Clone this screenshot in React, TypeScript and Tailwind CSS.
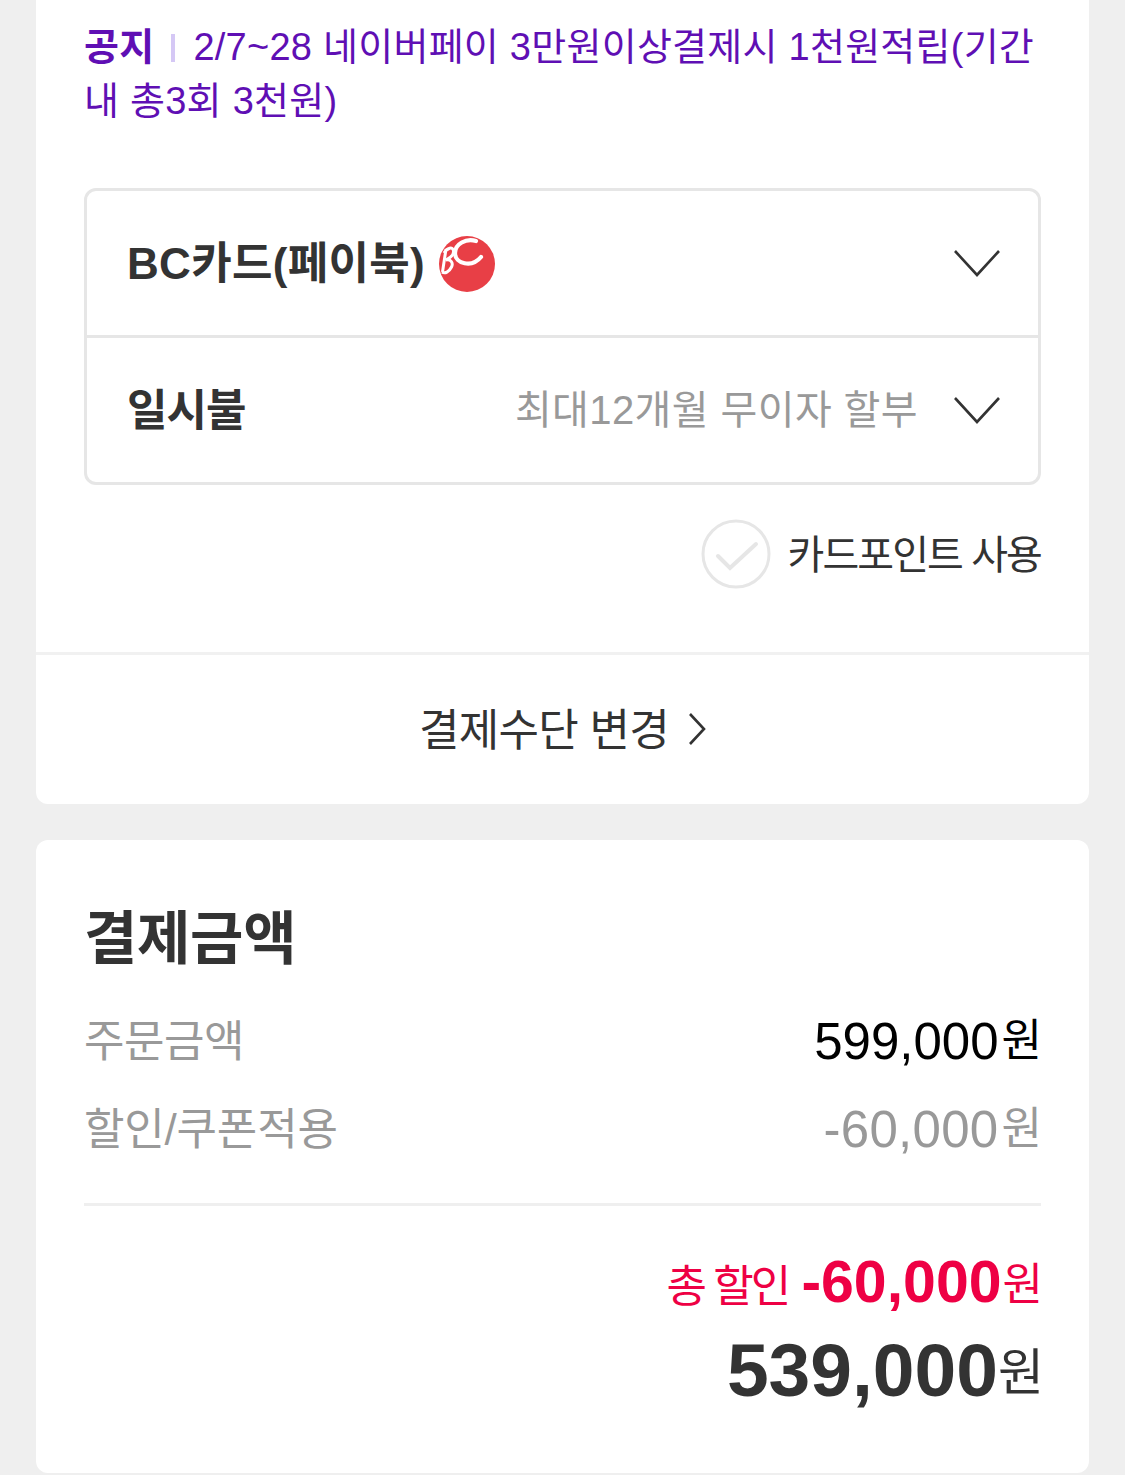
import React from "react"

const font = { fontFamily: '"Liberation Sans", "Noto Sans CJK KR", sans-serif' }

const Chevron = () => (
  <svg width="46" height="28" viewBox="0 0 46 28" fill="none" stroke="#333" strokeWidth="2.6" className="shrink-0">
    <path d="M1 1 L23 25 L45 1" />
  </svg>
)

const BcLogo = () => (
  <svg width="56" height="56" viewBox="0 0 56 56" className="shrink-0">
    <circle cx="28" cy="28" r="28" fill="#e83f46" />
    <path
      d="M5 17 C8 12 14 10 14.5 15 C15 19 11 22 7 24 C12 23 14.5 27 12.5 31 C10 36 6 38 3 36 M7 13 L3.5 36"
      fill="none"
      stroke="#fff"
      strokeWidth="3"
    />
    <path
      d="M37 5 C27 2 16 8 16 17 C16 28 33 32 42 21"
      fill="none"
      stroke="#fff"
      strokeWidth="4.2"
      strokeLinecap="round"
    />
  </svg>
)

export default function App() {
  return (
    <div
      className="min-h-[1475px] h-[1475px] overflow-hidden bg-[#efefef] px-[36px] flex flex-col gap-[36px]"
      style={font}
    >
      <section className="h-[804px] shrink-0 bg-white rounded-b-[12px] flex flex-col">
        <div className="px-[48px] pt-[20px] flex-1">
          <p className="text-[38px] leading-[54px] tracking-[0.25px] text-[#5f0fb4]">
            <b className="font-bold">공지</b>
            <span className="inline-block w-[4px] h-[28px] bg-[#d5c8f5] ml-[17px] mr-[18px] align-[-2px]" />
            2/7~28 네이버페이 3만원이상결제시 1천원적립(기간 내 총3회 3천원)
          </p>

          <div className="mt-[60px] h-[297px] border-[3px] border-[#e6e6e6] rounded-[12px] flex flex-col">
            <div className="h-[147px] border-b-[3px] border-[#e6e6e6] pl-[40px] pr-[38px] pt-[2px] flex items-center justify-between">
              <div className="flex items-center gap-[14px]">
                <span className="text-[44px] font-bold tracking-[0.3px] text-[#333]">BC카드(페이북)</span>
                <BcLogo />
              </div>
              <Chevron />
            </div>
            <div className="flex-1 pl-[40px] pr-[38px] pt-[2px] flex items-center justify-between">
              <span className="text-[44px] font-bold tracking-[-1px] text-[#333]">일시불</span>
              <div className="flex items-center gap-[36px]">
                <span className="text-[40px] tracking-[0.4px] text-[#999] pb-[3px]">최대12개월 무이자 할부</span>
                <Chevron />
              </div>
            </div>
          </div>

          <div className="mt-[34px] flex items-center justify-end gap-[16px]">
            <svg width="70" height="70" viewBox="0 0 70 70" fill="none" stroke="#e6e6e6" strokeWidth="3">
              <circle cx="35" cy="35" r="33" />
              <path d="M17 37 L29 49 L55 25" strokeWidth="4" strokeLinecap="round" />
            </svg>
            <span className="text-[40px] tracking-[-1.9px] text-[#333] pt-[2px]">카드포인트 사용</span>
          </div>
        </div>

        <div className="h-[152px] shrink-0 border-t-[3px] border-[#f1f1f1] flex items-center justify-center gap-[19px] pt-[2px]">
          <span className="text-[44px] tracking-[-0.7px] text-[#333]">결제수단 변경</span>
          <svg width="18" height="32" viewBox="0 0 18 32" fill="none" stroke="#333" strokeWidth="2.6" className="mb-[3px]">
            <path d="M2 1 L16 16 L2 31" />
          </svg>
        </div>
      </section>

      <section className="h-[633px] shrink-0 bg-white rounded-[12px] px-[48px] pt-[59px]">
        <h2 className="text-[58px] leading-[80px] font-bold tracking-[-0.3px] text-[#333]">결제금액</h2>

        <div className="mt-[19px] flex items-center justify-between h-[88px]">
          <span className="text-[44px] tracking-[-0.5px] text-[#999]">주문금액</span>
          <span className="text-[51px] text-black whitespace-nowrap">
            599,000<span className="text-[44px] ml-[3px] mr-[-1px] align-[3px]">원</span>
          </span>
        </div>
        <div className="flex items-center justify-between h-[88px]">
          <span className="text-[44px] tracking-[-0.2px] text-[#999]">할인/쿠폰적용</span>
          <span className="text-[51px] tracking-[0.3px] text-[#999] whitespace-nowrap">
            -60,000<span className="text-[44px] tracking-normal ml-[3px] mr-[-1px] align-[3px]">원</span>
          </span>
        </div>

        <div className="mt-[29px] border-t-[3px] border-[#efefef] pt-[36px] flex flex-col items-end">
          <p className="text-[44px] leading-[80px] tracking-[-3px] text-[#ee0044] whitespace-nowrap">
            총 할인 <b className="text-[59px] font-bold tracking-normal ml-[4px]">-60,000</b>
            <span className="tracking-normal ml-[1px] mr-[-2px] align-[2px]">원</span>
          </p>
          <p className="text-[50px] leading-[86px] text-[#333] whitespace-nowrap">
            <b className="text-[75px] font-bold">539,000</b>
            <span className="mr-[-3px] align-[6px]">원</span>
          </p>
        </div>
      </section>
    </div>
  )
}
